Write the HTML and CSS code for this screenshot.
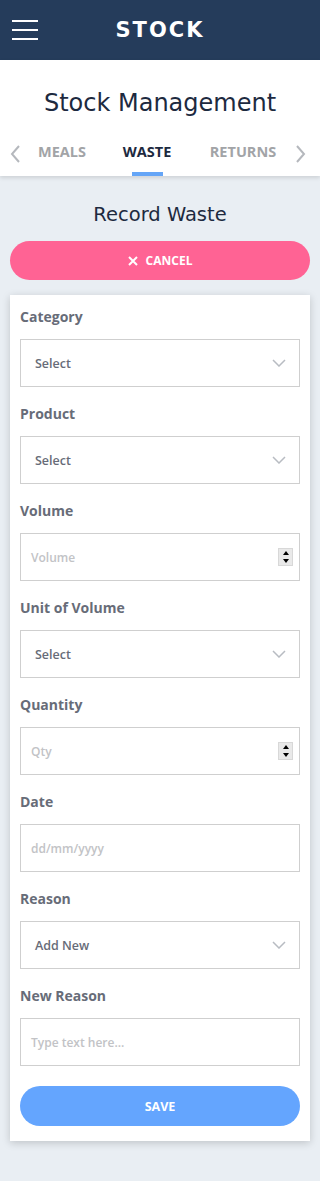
FILE: index.html
```html
<!DOCTYPE html>
<html>
<head>
<meta charset="utf-8">
<link rel="stylesheet" href="styles.css">
</head>
<body>
<header class="topbar">
  <button class="burger" aria-label="menu"><span></span><span></span><span></span></button>
  <div class="brand">STOCK</div>
</header>
<section class="pagehead">
  <h1 class="title">Stock Management</h1>
  <nav class="tabs">
    <svg class="arrow" width="12" height="20" viewBox="0 0 12 20"><path d="M10 2 L3 10 L10 18" fill="none" stroke="#b5b8bd" stroke-width="2"/></svg>
    <a class="tab">MEALS</a>
    <a class="tab active">WASTE</a>
    <a class="tab">RETURNS</a>
    <svg class="arrow" width="12" height="20" viewBox="0 0 12 20"><path d="M2 2 L9 10 L2 18" fill="none" stroke="#b5b8bd" stroke-width="2"/></svg>
  </nav>
</section>
<main class="content">
  <h2 class="subtitle">Record Waste</h2>
  <button class="cancel"><svg width="10" height="10" viewBox="0 0 10 10"><path d="M1 1 L9 9 M9 1 L1 9" stroke="#fff" stroke-width="2"/></svg><span>CANCEL</span></button>
  <form class="card">
    <label class="label">Category</label>
    <div class="field select"><span>Select</span><svg class="chev" width="14" height="8" viewBox="0 0 14 8"><path d="M1 1 L7 7 L13 1" fill="none" stroke="#b8bcc2" stroke-width="1.5"/></svg></div>
    <label class="label">Product</label>
    <div class="field select"><span>Select</span><svg class="chev" width="14" height="8" viewBox="0 0 14 8"><path d="M1 1 L7 7 L13 1" fill="none" stroke="#b8bcc2" stroke-width="1.5"/></svg></div>
    <label class="label">Volume</label>
    <div class="field input"><span class="ph">Volume</span><span class="spin"><i class="up"></i><i class="down"></i></span></div>
    <label class="label">Unit of Volume</label>
    <div class="field select"><span>Select</span><svg class="chev" width="14" height="8" viewBox="0 0 14 8"><path d="M1 1 L7 7 L13 1" fill="none" stroke="#b8bcc2" stroke-width="1.5"/></svg></div>
    <label class="label">Quantity</label>
    <div class="field input"><span class="ph">Qty</span><span class="spin"><i class="up"></i><i class="down"></i></span></div>
    <label class="label">Date</label>
    <div class="field input"><span class="ph">dd/mm/yyyy</span></div>
    <label class="label">Reason</label>
    <div class="field select"><span>Add New</span><svg class="chev" width="14" height="8" viewBox="0 0 14 8"><path d="M1 1 L7 7 L13 1" fill="none" stroke="#b8bcc2" stroke-width="1.5"/></svg></div>
    <label class="label">New Reason</label>
    <div class="field input"><span class="ph">Type text here...</span></div>
    <button type="button" class="save">SAVE</button>
  </form>
</main>
</body>
</html>
```
FILE: styles.css
```css
* { box-sizing: border-box; }
html, body { margin: 0; padding: 0; }
body {
  background: #e9eef3;
  font-family: "Open Sans", "DejaVu Sans", sans-serif;
  width: 320px;
  min-height: 1181px;
}
.topbar {
  height: 60px;
  background: #253c5b;
  display: flex;
  align-items: center;
}
.burger {
  margin-left: 12px;
  width: 26px;
  height: 20px;
  padding: 0;
  border: 0;
  background: none;
  display: flex;
  flex-direction: column;
  justify-content: space-between;
}
.burger span { display: block; height: 2px; background: #fff; width: 26px; }
.brand {
  flex: 1;
  text-align: center;
  margin-right: 38px;
  color: #fff;
  font-family: "DejaVu Sans", sans-serif;
  font-weight: bold;
  font-size: 21px;
  letter-spacing: 2px;
}
.pagehead {
  background: #fff;
  height: 116px;
  box-shadow: 0 2px 4px rgba(0,0,0,0.12);
  display: flex;
  flex-direction: column;
  align-items: center;
}
.title {
  margin: 28px 0 0;
  font-family: "DejaVu Sans", sans-serif;
  font-weight: 500;
  font-size: 24px;
  line-height: 30px;
  color: #1d2a3f;
}
.tabs {
  margin-top: 17px;
  width: 100%;
  display: flex;
  align-items: center;
  padding: 0 9px;
  height: 41px;
}
.arrow { flex: none; margin-top: -4px; }
.tab {
  font-weight: bold;
  font-size: 14.5px;
  color: #a2a4a7;
  text-align: center;
  height: 41px;
  line-height: 34px;
  position: relative;
}
.tabs .tab:nth-of-type(1) { width: 82px; padding-left: 0; }
.tabs .tab:nth-of-type(2) { width: 88px; color: #1d2a3f; }
.tabs .tab:nth-of-type(3) { width: 104px; }
.tab.active::after {
  content: "";
  position: absolute;
  left: 50%;
  bottom: 0;
  width: 31px;
  margin-left: -15px;
  height: 4px;
  background: #64a5f7;
}
.content {
  padding: 0 10px 40px;
  display: flex;
  flex-direction: column;
}
.subtitle {
  margin: 26px 0 0;
  text-align: center;
  font-family: "DejaVu Sans", sans-serif;
  font-weight: normal;
  font-size: 19.5px;
  line-height: 25px;
  color: #1d2a3f;
}
.cancel {
  margin-top: 14px;
  height: 39px;
  border: 0;
  border-radius: 20px;
  background: #ff6394;
  color: #fff;
  font-family: "Open Sans", sans-serif;
  font-weight: bold;
  font-size: 12px;
  display: flex;
  align-items: center;
  justify-content: center;
  gap: 8px;
}
.card {
  margin-top: 15px;
  background: #fff;
  box-shadow: 0 2px 8px rgba(0,0,0,0.18);
  padding: 12px 10px 15px;
  display: flex;
  flex-direction: column;
}
.label {
  display: block;
  height: 20px;
  line-height: 20px;
  font-weight: bold;
  font-size: 14px;
  color: #676c78;
  margin: 17px 0 12px;
}
.label:first-child { margin-top: 0; }
.field {
  height: 48px;
  border: 1px solid #cfcfcf;
  display: flex;
  align-items: center;
  font-size: 12.5px;
}
.select { padding: 0 13px 0 14px; justify-content: space-between; color: #676c78; font-weight: 600; }
.input { padding: 0 6px 0 10px; justify-content: space-between; font-size: 12px; }
.ph { color: #c2c3c6; font-weight: 600; }
.spin {
  width: 15px;
  height: 18px;
  background: #e9e9e9;
  border: 1px solid #d8d8d8;
  display: flex;
  flex-direction: column;
  align-items: center;
  justify-content: space-around;
}
.spin i { display: block; width: 0; height: 0; border-left: 3px solid transparent; border-right: 3px solid transparent; }
.spin .up { border-bottom: 4px solid #000; }
.spin .down { border-top: 4px solid #000; }
.save {
  margin-top: 20px;
  height: 40px;
  border: 0;
  border-radius: 20px;
  background: #64a5fe;
  color: #fff;
  font-family: "Open Sans", sans-serif;
  font-weight: bold;
  font-size: 12.5px;
}
```
